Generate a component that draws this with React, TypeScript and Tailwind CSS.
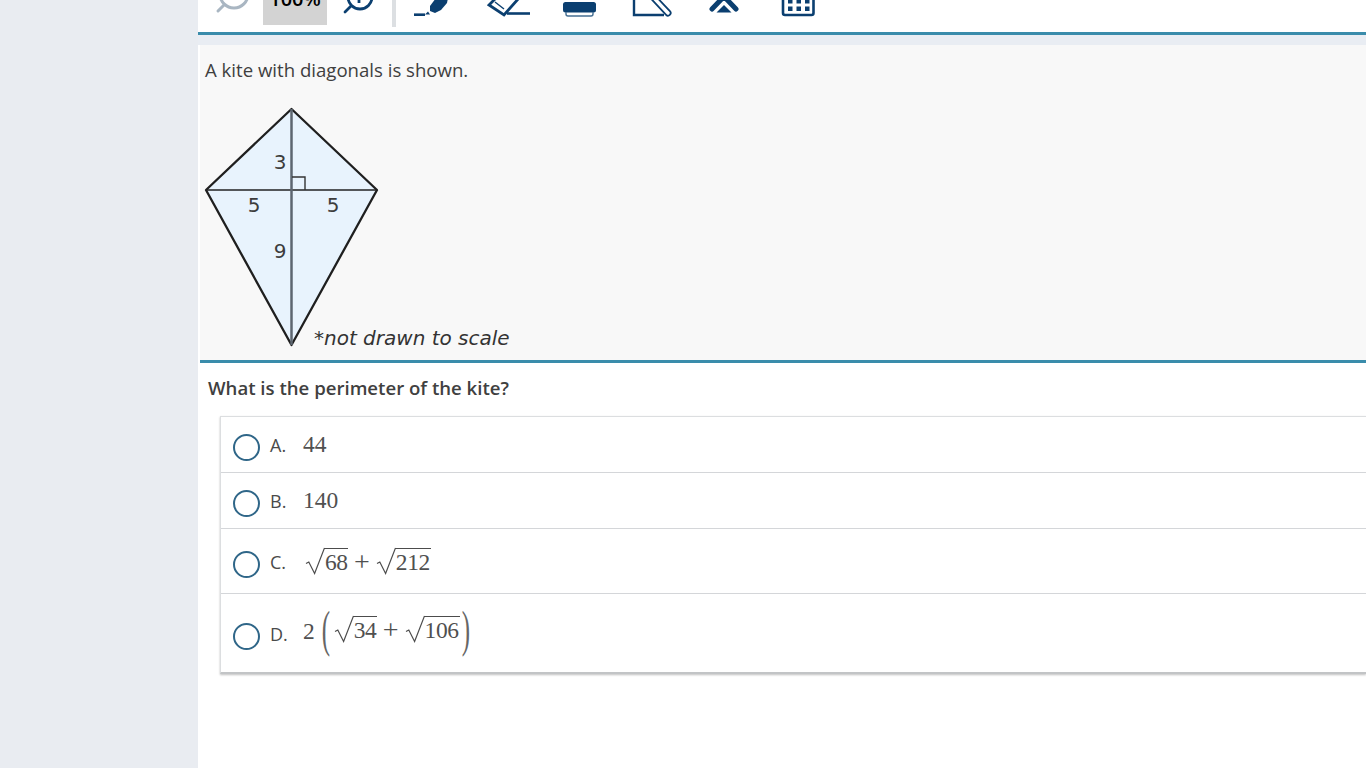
import React from 'react';

const navy = '#0b3f70';

function Sqrt({ children, w }: { children: React.ReactNode; w: number }) {
  return (
    <span className="inline-flex items-end">
      <svg width="20" height="28" viewBox="0 0 20 28" className="-mr-px shrink-0">
        <path d="M1 16.5 L3.8 15 L9.6 26.5 L19.5 1" fill="none" stroke="#4c4c4c" strokeWidth="1.2" />
      </svg>
      <span className="border-t border-[#4c4c4c] leading-[27px] h-[27px] block tracking-[-0.4px] pl-[1px]" style={{ width: w }}>
        {children}
      </span>
    </span>
  );
}

function Option({ letter, height, children, top }: { letter: string; height: string; children: React.ReactNode; top: string }) {
  return (
    <div className={`flex items-center ${height} border-b border-[#d4d6d9] last:border-b-0 pl-[12px]`}>
      <div className={`w-[27px] h-[27px] rounded-full border-2 border-[#2f6688] bg-white shrink-0 ${top}`} />
      <span className="ml-[10px] w-[33px] text-[18px] text-[#4a4a4a] shrink-0 mt-[2px]">{letter}</span>
      <div className="font-['Liberation_Serif',serif] text-[23.5px] text-[#505050] flex items-center">{children}</div>
    </div>
  );
}

export default function App() {
  return (
    <div className="h-[768px] w-[1366px] overflow-hidden flex bg-white font-['Open_Sans',sans-serif]">
      <div className="w-[198px] shrink-0 bg-[#e9ecf1]" />
      <div className="flex-1 min-w-0">
        <div className="h-[32px] overflow-hidden relative bg-white flex items-end">
          <svg width="640" height="32" viewBox="0 0 640 32" className="absolute left-0 top-0">
            {/* zoom out */}
            <g fill="none" stroke="#a9b6c2" strokeWidth="3">
              <circle cx="36" cy="-6" r="14" />
              <path d="M26 5 L20 11" strokeLinecap="round" />
            </g>
            {/* zoom in */}
            <g fill="none" stroke={navy} strokeWidth="2.8">
              <circle cx="162" cy="-3" r="12" />
              <path d="M153 6 L147 12" strokeLinecap="round" />
              <path d="M161 -1 L161 3" />
            </g>
            {/* pen */}
            <path d="M216 14.7 H227" stroke={navy} strokeWidth="2.6" />
            <path d="M227 14.5 L232 14.5 L230 11.5 Z" fill={navy} />
            <path d="M232 6 L238 -2 L250 -2 L249 3 L243 10 L237 13 L232 11 Z" fill={navy} />
            {/* eraser */}
            <path d="M299 -3 L291 5 L306 15 L321 -2" fill="none" stroke={navy} strokeWidth="2.8" />
            <path d="M297 2 L306 9" fill="none" stroke={navy} strokeWidth="1.4" />
            <path d="M309 13.5 H332" stroke={navy} strokeWidth="2.6" />
            {/* printer */}
            <rect x="365" y="2" width="33" height="10.5" rx="2.5" fill={navy} />
            <path d="M368 12 V14 Q368 16 370 16 H393 Q395 16 395 14 V12" fill="none" stroke="#456f93" strokeWidth="1.4" />
            {/* notepad */}
            <path d="M436 -4 V15 H466" fill="none" stroke={navy} strokeWidth="2.4" />
            <path d="M455 -3 L470 13" stroke={navy} strokeWidth="7" strokeLinecap="round" />
            <path d="M455 -3 L470 13" stroke="#fff" strokeWidth="3.4" strokeLinecap="round" />
            {/* collapse */}
            <path d="M514 9 L526 -3.5 L538 9" fill="none" stroke={navy} strokeWidth="5" strokeLinecap="round" />
            <path d="M518.5 12.5 L526 5 L533.5 12.5 Z" fill={navy} />
            {/* calculator */}
            <rect x="585" y="-6" width="30.5" height="21" rx="2" fill="none" stroke={navy} strokeWidth="2.6" />
            <g fill={navy}>
              <rect x="590" y="-1" width="4.5" height="4.5" />
              <rect x="598.5" y="-1" width="4.5" height="4.5" />
              <rect x="607" y="-1" width="4.5" height="4.5" />
              <rect x="590" y="6.5" width="4.5" height="4.5" />
              <rect x="598.5" y="6.5" width="4.5" height="4.5" />
              <rect x="607" y="6.5" width="4.5" height="4.5" />
            </g>
          </svg>
          <div className="ml-[65px] w-[64px] h-[40px] bg-[#d3d3d3] flex items-end justify-center relative mb-[7px] shrink-0">
            <span className="text-[20px] font-semibold leading-none text-black mb-[16px]">100%</span>
          </div>
          <div className="ml-[65px] w-[4px] h-[40px] bg-[#dcdfe2] relative shrink-0 mb-[5px]" />
        </div>
        <div className="h-[3px] bg-[#3a8cab]" />
        <div className="h-[10px] bg-[#e9edf3]" />
        <div className="ml-[2px] h-[315px] bg-[#f8f8f8] pl-[5px] pt-[13px]">
          <p className="text-[18.6px] leading-[24px] text-[#3f3f3f]">A kite with diagonals is shown.</p>
          <svg width="320" height="258" viewBox="0 0 320 258" className="-ml-[5px] mt-[15px] block">
            <path d="M91.5 12 L177 93 L91.5 248 L6 93 Z" fill="#e8f3fd" stroke="#1f1f1f" strokeWidth="2.3" strokeLinejoin="round" />
            <path d="M6 93 H177" stroke="#222" strokeWidth="1.7" />
            <path d="M91.5 12 V248" stroke="#5d6670" strokeWidth="2.5" />
            <path d="M92 80 H105 V93" fill="none" stroke="#333" strokeWidth="1.4" />
            <g fontFamily="DejaVu Sans, sans-serif" fontSize="20" fill="#3c3c3c" textAnchor="middle">
              <text x="80" y="72">3</text>
              <text x="54" y="115">5</text>
              <text x="133" y="115">5</text>
              <text x="80" y="161">9</text>
            </g>
            <text x="114" y="248" fontFamily="DejaVu Sans, sans-serif" fontStyle="italic" fontSize="20" fill="#333">*not drawn to scale</text>
          </svg>
        </div>
        <div className="ml-[2px] h-[3px] bg-[#3a8cab]" />
        <p className="ml-[10px] mt-[13px] text-[18.6px] leading-[24px] font-semibold text-[#404040]">What is the perimeter of the kite?</p>
        <div className="ml-[22px] mt-[16px] border-t border-l border-[#dcdee0] border-b-[2px] border-b-[#c2c4c6] shadow-[0_1px_2px_rgba(0,0,0,0.25)] bg-white">
          <Option letter="A." height="h-[56px]" top="mt-[5px]">
            <span className="mt-[1px]">44</span>
          </Option>
          <Option letter="B." height="h-[56px]" top="mt-[5px]">
            <span className="mt-[1px]">140</span>
          </Option>
          <Option letter="C." height="h-[65px]" top="mt-[7px]">
            <span className="flex items-end -mt-[1px] ml-[2px]">
              <Sqrt w={24}>68</Sqrt>
              <span className="mx-[6px] leading-[27px] text-[28px]">+</span>
              <Sqrt w={36}>212</Sqrt>
            </span>
          </Option>
          <Option letter="D." height="h-[78px]" top="mt-[6px]">
            <span className="flex items-center -mt-[3px]">
              <span className="mr-[6px]">2</span>
              <span className="w-[10px] flex justify-center text-[50px] leading-none -mt-[6px] scale-x-50 text-[#666]">(</span>
              <span className="flex items-end ml-[3px] mb-[5px]">
                <Sqrt w={24}>34</Sqrt>
                <span className="mx-[6px] leading-[27px] text-[28px]">+</span>
                <Sqrt w={36}>106</Sqrt>
              </span>
              <span className="w-[10px] flex justify-center text-[50px] leading-none -mt-[6px] ml-[1px] scale-x-50 text-[#666]">)</span>
            </span>
          </Option>
        </div>
      </div>
    </div>
  );
}
